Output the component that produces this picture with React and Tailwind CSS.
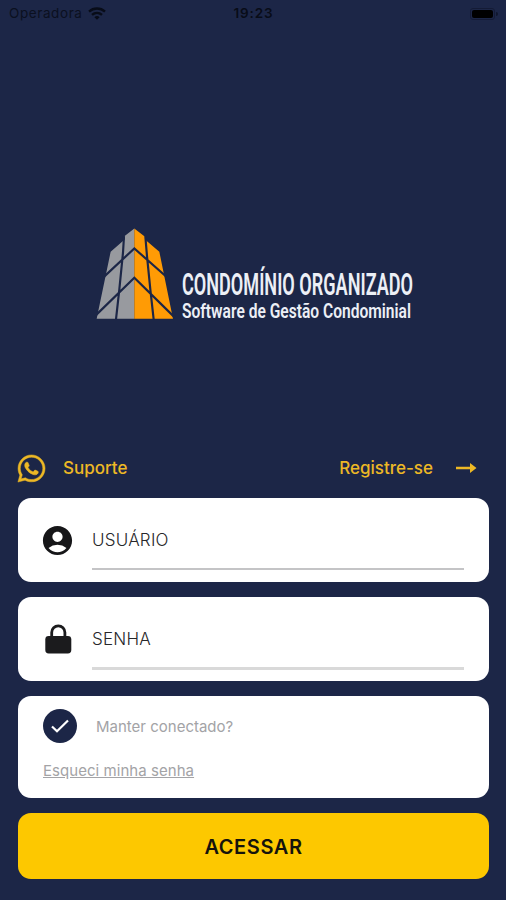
import { FaWhatsapp } from 'react-icons/fa'
import { MdAccountCircle } from 'react-icons/md'

function StatusBar() {
  return (
    <header className="grid h-[27px] grid-cols-3 items-center pr-2 pl-[9px] text-[13.5px] text-[#080c18]">
      <div className="flex items-center gap-[5px]">
        <span className="tracking-[0.6px] text-[#0b1020]">Operadora</span>
        <svg viewBox="0 0 18 13" className="h-[13px] w-[18px]" fill="none" stroke="currentColor" strokeWidth="2.4">
          <path d="M1 4.6C5.6 0.4 12.4 0.4 17 4.6" />
          <path d="M4 7.9C6.9 5.3 11.1 5.3 14 7.9" />
          <path d="M6.4 10.2Q9 8 11.6 10.2L9 12.8Z" fill="currentColor" stroke="none" />
        </svg>
      </div>
      <span className="text-center font-semibold tracking-[0.9px]">19:23</span>
      <div className="flex items-center justify-end gap-px">
        <div className="h-[12px] w-[25px] rounded-[3px] border border-[#141b36] p-px">
          <div className="h-full w-full rounded-[2px] bg-black" />
        </div>
        <div className="h-1 w-[2px] rounded-r bg-[#10172e]" />
      </div>
    </header>
  )
}

function Logo() {
  return (
    <svg
      viewBox="0 0 326 100"
      className="h-[100px] w-[326px] overflow-visible"
      role="img"
      aria-label="Condomínio Organizado"
    >
      <g transform="translate(-6 -7.6) scale(.3333)">
        <path d="M133 27L104 50V60L62 97L20 298H133Z" fill="#989a9f" />
        <path d="M133 27L165 52V60L208 97L249 298H133Z" fill="#ff9b05" />
        <path
          d="M102 50L99 100L88 210L78 300M166 50L171 110L181 210L191 300M40 174L133 87L230 173M14 291L133 175L254 294"
          fill="none"
          stroke="#1c2647"
          strokeWidth="6.5"
        />
      </g>
      <g fill="#eceff6" className="font-['Roboto']">
        <text x="86" y="67.5" fontSize="32" fontWeight="600" textLength="231" lengthAdjust="spacingAndGlyphs">
          CONDOMÍNIO ORGANIZADO
        </text>
        <text x="86" y="90.5" fontSize="21" fontWeight="600" textLength="229" lengthAdjust="spacingAndGlyphs">
          Software de Gestão Condominial
        </text>
      </g>
    </svg>
  )
}

function LockIcon() {
  return (
    <svg viewBox="0 0 28 30" className="ml-px h-[30px] w-[28px]">
      <path d="M7.7 13V8.5a6.6 6.6 0 0 1 13.2 0V13" fill="none" stroke="#1b1b1d" strokeWidth="2.8" />
      <rect x="1.3" y="12" width="26" height="17.4" rx="3.4" fill="#1b1b1d" />
    </svg>
  )
}

function Field({ icon, label, lineClass }) {
  return (
    <label className="flex h-[84px] rounded-[13px] bg-white px-[25px]">
      <span className="flex w-[49px] items-center">{icon}</span>
      <span className="flex flex-1 flex-col justify-between">
        <span className="pt-[30px] text-[17px] leading-6 font-light tracking-[0.25px] text-[#27272a]">{label}</span>
        <span className={lineClass} />
      </span>
    </label>
  )
}

export default function App() {
  return (
    <div className="flex h-[900px] w-full flex-col bg-[#1c2647] font-['Inter',sans-serif]">
      <StatusBar />

      <div className="mt-[200px] ml-[96px]">
        <Logo />
      </div>

      <main className="mt-[125px] flex flex-col pr-[17px] pl-[18px]">
        <div className="flex h-[32px] items-center justify-between text-[17px] font-medium text-[#edb825]">
          <a className="flex items-center gap-[16px]">
            <FaWhatsapp className="-ml-[2px] h-[31px] w-[31px] stroke-current stroke-[8px]" />
            <span className="pt-[2px]">Suporte</span>
          </a>
          <a className="flex items-center gap-[22px] pr-[12px]">
            <span className="pt-[2px]">Registre-se</span>
            <svg viewBox="0 0 22 12" className="h-3 w-[22px]" fill="currentColor">
              <path d="M1 4.7H15V1L21.5 6L15 11V7.3H1Z" />
            </svg>
          </a>
        </div>

        <form className="mt-[14px] flex flex-col gap-[15px]">
          <Field
            icon={<MdAccountCircle className="-ml-[3px] h-[35px] w-[35px] text-[#161618]" />}
            label="USUÁRIO"
            lineClass="mb-[12px] h-[2px] bg-[#c4c4c6]"
          />
          <Field icon={<LockIcon />} label="SENHA" lineClass="mb-[11px] h-[3px] bg-[#d9d9d9]" />

          <section className="flex h-[102px] flex-col rounded-[13px] bg-white px-[25px] pt-[13px] text-[15px] text-[#a3a3a6]">
            <div className="flex items-center gap-[19px]">
              <span className="flex h-[34px] w-[34px] items-center justify-center rounded-full bg-[#1c2647]">
                <svg viewBox="0 0 18 14" className="h-[14px] w-[18px]" fill="none" stroke="#fff" strokeWidth="2.2">
                  <path d="M1 7.5L6 12.3L17 1.5" />
                </svg>
              </span>
              <span className="pt-[2px]">Manter conectado?</span>
            </div>
            <a className="mt-[18px] text-[15px] leading-5 tracking-[0.05px] underline">Esqueci minha senha</a>
          </section>

          <button
            type="button"
            className="h-[66px] rounded-[13px] bg-[#fdc800] pt-px text-[20px] font-semibold tracking-[0.6px] text-[#15130c]"
          >
            ACESSAR
          </button>
        </form>
      </main>
    </div>
  )
}
